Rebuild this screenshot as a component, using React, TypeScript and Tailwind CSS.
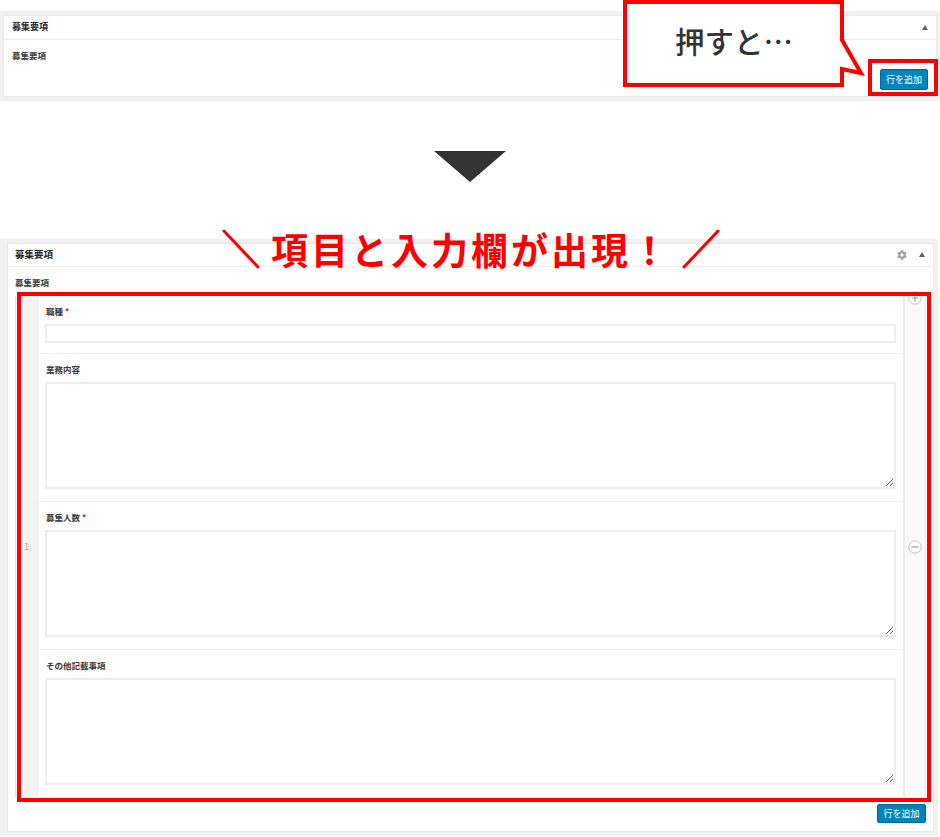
import { FaCog } from "react-icons/fa";

const fontStack = { fontFamily: '"Noto Sans CJK JP", "Liberation Sans", sans-serif' };

function CollapseArrow() {
  return <span className="block h-0 w-0 border-x-[3.5px] border-b-[5px] border-x-transparent border-b-[#60646a]" />;
}

function Button() {
  return (
    <button className="block h-full w-full rounded-[2px] border border-[#006799] bg-[#0085ba] text-[9px] leading-none text-white">
      行を追加
    </button>
  );
}

function Field({ label, required, tall }: { label: string; required?: boolean; tall?: boolean }) {
  return (
    <div className={`border-b border-[#f1f1f1] pl-[7px] pr-[7px] pt-[10px] ${tall ? "pb-[12px]" : "pb-[10px]"}`}>
      <div className="mb-[6px] h-[12px] pl-[1px] text-[8.5px] font-bold leading-[10px] text-[#3a3a3a]">
        {label}
        {required && <span className="ml-[2px] text-[#f00]">*</span>}
      </div>
      {tall ? (
        <textarea className="block h-[107px] w-full border-2 border-[#eeeeee] bg-white outline-none" />
      ) : (
        <input className="block h-[19px] w-full border-2 border-[#eeeeee] bg-white outline-none" />
      )}
    </div>
  );
}

function CircleIcon({ plus }: { plus?: boolean }) {
  return (
    <svg width="14" height="14" viewBox="0 0 14 14" fill="none">
      <circle cx="7" cy="7" r="6.2" fill="#fff" stroke="#c4c4c4" />
      <path d={plus ? "M3.5 7h7M7 3.5v7" : "M3.5 7h7"} stroke="#a0a0a0" strokeWidth="1.2" />
    </svg>
  );
}

export default function App() {
  return (
    <div className="relative h-[837px] w-[940px] overflow-hidden bg-white pt-[11px]" style={fontStack}>
      {/* before */}
      <div className="bg-[#f1f1f1] px-[3px] py-[4px]">
        <div className="bg-white ring-1 ring-inset ring-[#e9e9e9]">
          <div className="flex h-[25px] items-center justify-between border-b border-[#eee] pl-[9px] pr-[9px]">
            <span className="text-[9px] font-bold text-[#23282d]">募集要項</span>
            <CollapseArrow />
          </div>
          <div className="px-[9px] pb-[7px] pt-[10px]">
            <div className="h-[12px] text-[8.5px] font-bold leading-[10px] text-[#3a3a3a]">募集要項</div>
            <div className="ml-auto mt-[7px] h-[21px] w-[48px]">
              <Button />
            </div>
          </div>
        </div>
      </div>

      <div className="mt-[50px] flex justify-center">
        <svg width="72" height="31" viewBox="0 0 72 31">
          <polygon points="0,0 72,0 36,31" fill="#333" />
        </svg>
      </div>

      {/* after */}
      <div className="mt-[57px] w-[938px] bg-[#f1f1f1] pb-[4px] pl-[7px] pr-[4px] pt-[4px]">
        <div className="bg-white ring-1 ring-inset ring-[#e9e9e9]">
          <div className="flex h-[24px] items-center border-b border-[#eee] pl-[8px] pr-[9px]">
            <span className="text-[9.5px] font-bold text-[#23282d]">募集要項</span>
            <FaCog className="ml-auto mr-[12px] text-[10px] text-[#a0a5aa]" />
            <CollapseArrow />
          </div>
          <div className="pb-[9px] pl-[8px] pr-[8px] pt-[10px]">
            <div className="mb-[7px] h-[12px] text-[8.5px] font-bold leading-[10px] text-[#3a3a3a]">募集要項</div>
            <div className="flex border-x border-[#e5e5e5]">
              <div className="flex w-[22px] items-center justify-center border-r border-[#e8e8e8] bg-[#f4f4f4] text-[9px] text-[#aaa]">
                1
              </div>
              <div className="min-w-0 flex-1 bg-white">
                <Field label="職種" required />
                <Field label="業務内容" tall />
                <Field label="募集人数" required tall />
                <Field label="その他記載事項" tall />
              </div>
              <div className="relative flex w-[22px] items-center justify-center border-l-2 border-[#ececec] bg-[#f9f9f9]">
                <CircleIcon />
                <span className="absolute left-[3px] top-[-5px] leading-none">
                  <CircleIcon plus />
                </span>
              </div>
            </div>
            <div className="ml-auto mt-[6px] h-[19px] w-[49px]">
              <Button />
            </div>
          </div>
        </div>
      </div>

      {/* annotations */}
      <svg className="absolute left-[620px] top-0" width="250" height="90" viewBox="0 0 250 90" fill="none">
        <path d="M5 2H222V40L241 73L222 69V85H5Z" fill="#fff" stroke="#f00" strokeWidth="4" />
      </svg>
      <div className="absolute left-[675px] top-[18px] text-[29.5px] font-medium leading-[44px] text-[#333]">押すと…</div>
      <div className="absolute left-[868px] top-[59px] h-[37px] w-[70px] border-4 border-[#f00]" />
      <div className="absolute left-[17px] top-[292px] h-[510px] w-[914px] border-4 border-[#f00]" />

      <svg className="absolute left-[222px] top-[229px]" width="38" height="40" viewBox="0 0 38 40" fill="none">
        <path d="M2 2L36 38" stroke="#f00" strokeWidth="3" strokeLinecap="round" />
      </svg>
      <div className="absolute left-[271px] top-[222px] whitespace-nowrap text-[37px] font-bold leading-[54px] tracking-[3px] text-[#f00]">
        項目と入力欄が出現！
      </div>
      <svg className="absolute left-[682px] top-[229px]" width="38" height="40" viewBox="0 0 38 40" fill="none">
        <path d="M36 2L2 38" stroke="#f00" strokeWidth="3" strokeLinecap="round" />
      </svg>
    </div>
  );
}
